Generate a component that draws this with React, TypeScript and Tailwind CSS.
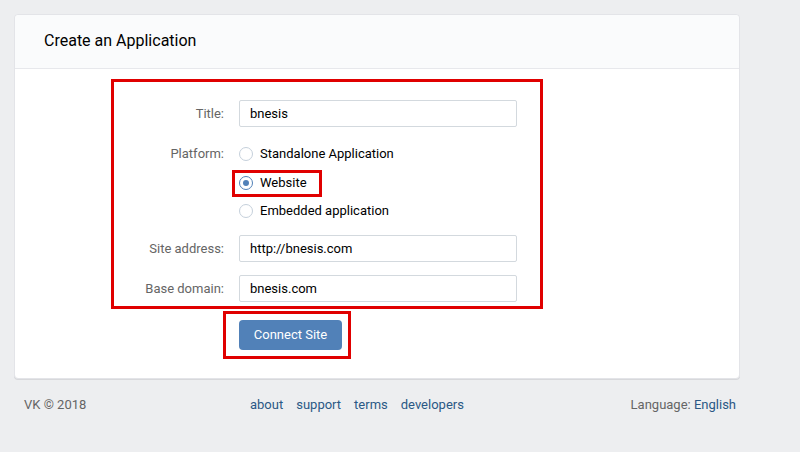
import React from 'react';

const font = { fontFamily: 'Roboto, "Open Sans", Arial, sans-serif' };

function Radio({ label, checked }: { label: string; checked?: boolean }) {
  return (
    <div className="flex items-center h-[20px]">
      <span
        className={`w-[14px] h-[14px] rounded-full border flex items-center justify-center bg-white ${
          checked ? 'border-[#5181b8]' : 'border-[#c5d0db]'
        }`}
      >
        {checked && <span className="w-[6px] h-[6px] rounded-full bg-[#5181b8]" />}
      </span>
      <span className="ml-[7px] text-[13px] text-black">{label}</span>
    </div>
  );
}

function Field({ label, value, className = '' }: { label: string; value: string; className?: string }) {
  return (
    <div className={`flex items-center ${className}`}>
      <label className="w-[110px] text-right text-[13px] text-[#656565]">{label}</label>
      <div className="ml-[15px] w-[278px] h-[27px] border border-[#d3d9de] rounded-[2px] bg-white flex items-center pl-[10px] text-[13px] text-black">
        {value}
      </div>
    </div>
  );
}

export default function App() {
  return (
    <div className="min-h-[452px] bg-[#edeef0] pt-[14px] pl-[14px]" style={font}>
      <div className="w-[726px] bg-white border border-[#e3e4e8] rounded-[4px] shadow-[0_1px_0_0_#d7d8db]">
        <div className="h-[54px] bg-[#fafbfc] border-b border-[#e7e8ec] rounded-t-[4px] flex items-center pl-[29px] pb-[1px]">
          <h1 className="text-[16px] text-[#000]">Create an Application</h1>
        </div>

        <div className="ml-[96px] mt-[10px] w-[432px] border-[3px] border-[#e00000] pt-[18px] pb-[4px]">
          <Field label="Title:" value="bnesis" />

          <div className="flex mt-[17px]">
            <label className="w-[110px] text-right text-[13px] text-[#656565] h-[20px] leading-[20px]">Platform:</label>
            <div className="ml-[15px]">
              <Radio label="Standalone Application" />
              <div className="relative mt-[9px]">
                <Radio label="Website" checked />
                <span className="absolute left-[-7px] top-[-3px] w-[90px] h-[27px] border-[3px] border-[#e00000] pointer-events-none" />
              </div>
              <div className="mt-[8px]">
                <Radio label="Embedded application" />
              </div>
            </div>
          </div>

          <Field label="Site address:" value="http://bnesis.com" className="mt-[14px]" />
          <Field label="Base domain:" value="bnesis.com" className="mt-[13px]" />
        </div>

        <div className="ml-[208px] mt-[2px] w-[128px] h-[48px] border-[3px] border-[#e00000] pl-[13px] pt-[6px]">
          <button className="w-[103px] h-[30px] rounded-[4px] bg-[#5181b8] text-white text-[13px]">
            Connect Site
          </button>
        </div>
        <div className="h-[19px]" />
      </div>

      <div className="w-[726px] flex items-center mt-[16px] pl-[10px] pr-[4px] text-[13px]">
        <span className="text-[#656565] w-[226px]">VK © 2018</span>
        <div className="flex gap-[13px] text-[#2a5885]">
          <span>about</span>
          <span>support</span>
          <span>terms</span>
          <span>developers</span>
        </div>
        <div className="flex-1 text-right">
          <span className="text-[#656565]">Language: </span>
          <span className="text-[#2a5885]">English</span>
        </div>
      </div>
    </div>
  );
}
